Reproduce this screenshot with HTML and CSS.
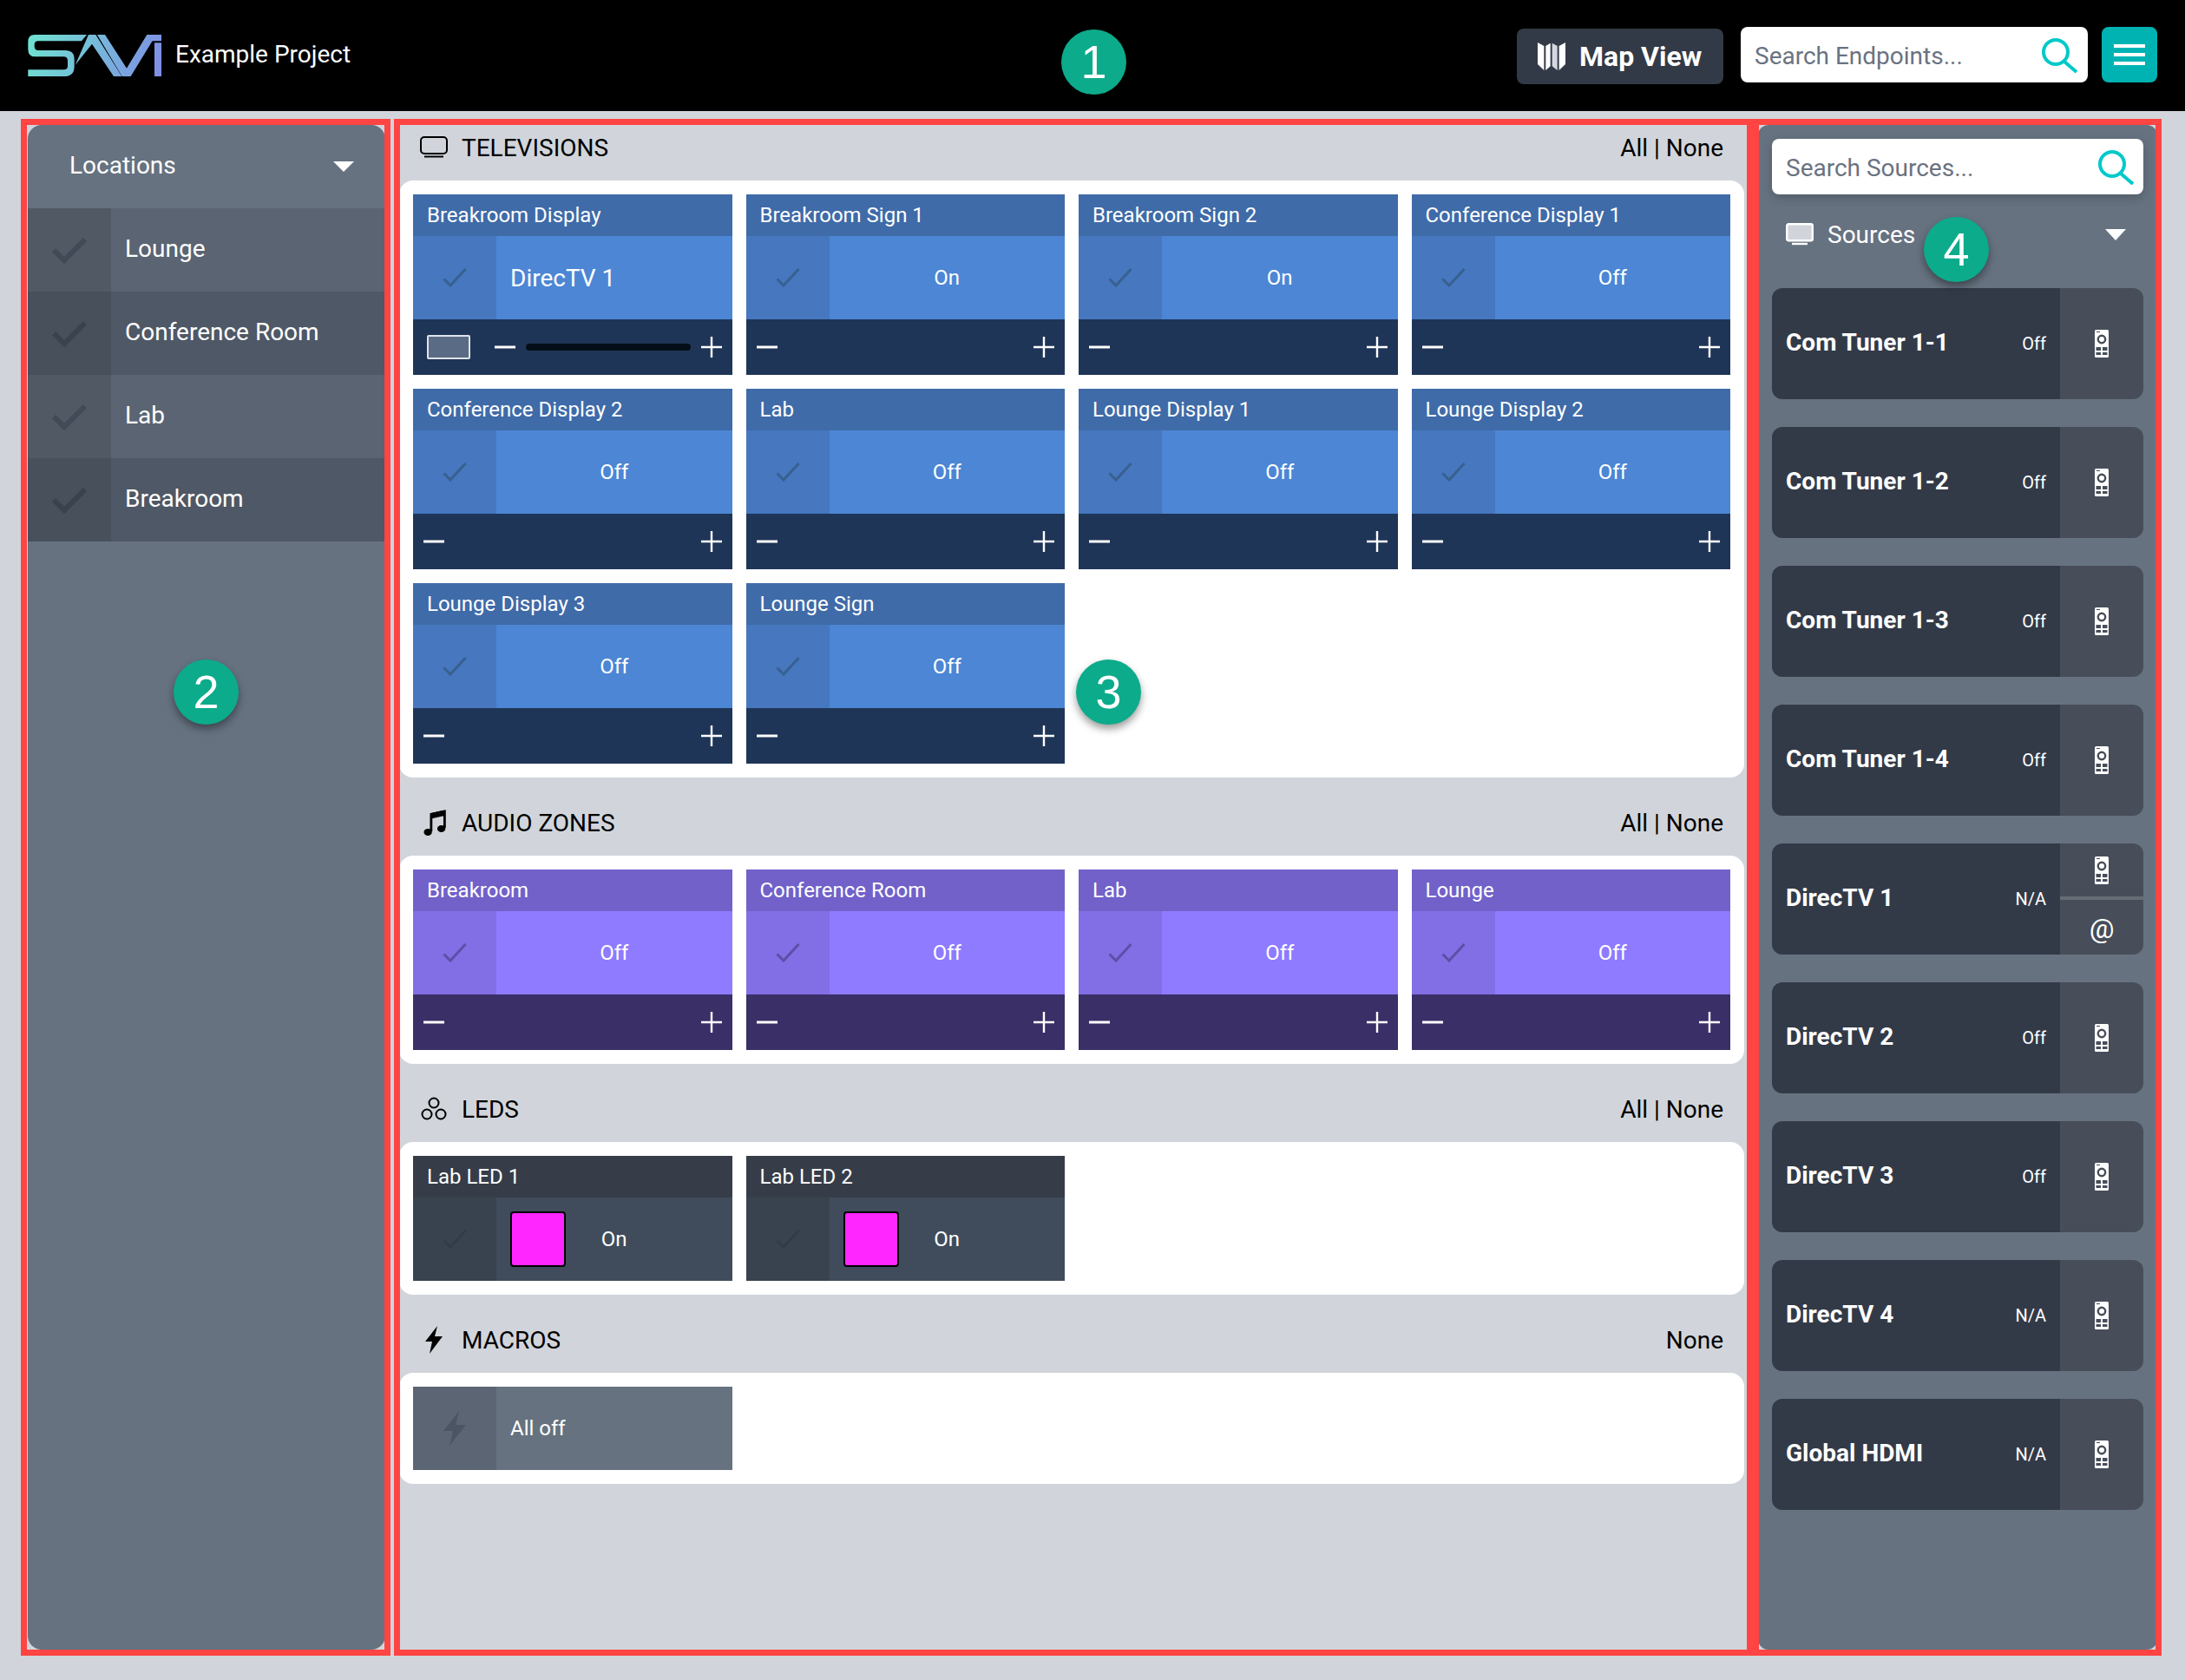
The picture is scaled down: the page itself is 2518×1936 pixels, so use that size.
FILE: index.html
```html
<!DOCTYPE html>
<html lang="en">
<head>
<meta charset="utf-8">
<title>SAVI - Example Project</title>
<link rel="stylesheet" href="styles.css">
</head>
<body>
<svg class="defs" width="0" height="0" aria-hidden="true">
  <defs>
    <linearGradient id="logo-grad" gradientUnits="userSpaceOnUse" x1="36" y1="60" x2="498" y2="204">
      <stop offset="0" stop-color="#6fe3cf"/>
      <stop offset="1" stop-color="#7f8de6"/>
    </linearGradient>
  </defs>
  <symbol id="i-check" viewBox="0 0 28 22"><path d="M1.5 12.5 L9 20 L26.5 1" fill="none" stroke="currentColor" stroke-width="3"/></symbol>
  <symbol id="i-check-bold" viewBox="0 0 40 31"><path d="M2 15 L14 27 L38 3" fill="none" stroke="currentColor" stroke-width="6"/></symbol>
  <symbol id="i-plus" viewBox="0 0 24 24"><path d="M12 0V24M0 12H24" stroke="currentColor" stroke-width="2.4"/></symbol>
  <symbol id="i-minus" viewBox="0 0 24 24"><path d="M0 12H24" stroke="currentColor" stroke-width="3"/></symbol>
  <symbol id="i-search" viewBox="0 0 42 40"><circle cx="16" cy="16" r="14" fill="none" stroke="currentColor" stroke-width="4"/><path d="M26 27 L40 39" stroke="currentColor" stroke-width="4"/></symbol>
  <symbol id="i-remote" viewBox="0 0 16 32">
    <rect width="16" height="32" rx="1.5" fill="#fff"/>
    <rect x="2" y="2" width="4" height="1" fill="#474d59"/>
    <circle cx="8" cy="11" r="4.2" fill="none" stroke="#474d59" stroke-width="2.4"/>
    <path d="M1.5 20H7V24H1.5ZM9 20H14.5V24H9ZM1.5 26H7V29H1.5ZM9 26H14.5V29H9Z" fill="#474d59"/>
  </symbol>
  <symbol id="i-bolt" viewBox="0 0 28 40"><path d="M19 0 L1 23 H12 L8 40 L27 16 H15 Z" fill="currentColor"/></symbol>
</svg>

<header class="topbar">
  <div class="brand">
    <svg class="logo" viewBox="36 60 462 144" aria-label="SAVI">
      <path fill="url(#logo-grad)" d="M60 60H240L222 82H72Q59 82 59 95V100Q59 114 72 114H165Q197 114 197 145V170Q197 204 160 204H37V181H160Q174 181 174 168V150Q174 136 160 136H62Q37 136 37 110V85Q37 60 60 60Z"/>
      <path fill="url(#logo-grad)" d="M200 165L246 60H271L361 204H333L258 92Z"/>
      <path fill="url(#logo-grad)" d="M276 60H303L378 176L448 60H480L392 204H362Z"/>
      <path fill="url(#logo-grad)" d="M474 88H498V204H474ZM468 60H498V82H456Z"/>
    </svg>
    <span class="project">Example Project</span>
  </div>
  <div class="topbar-actions">
    <button class="map-btn" type="button">
      <svg class="map-icon" viewBox="36 30 96 96">
        <path fill="#fff" d="M36 30L58 42V126L36 105Z"/>
        <path fill="#fff" d="M64 42L80 32V112L64 126Z"/>
        <path fill="#d5d8de" d="M86 32L104 42V126L86 112Z"/>
        <path fill="#fff" d="M110 42L132 30V105L110 126Z"/>
      </svg>
      Map View
    </button>
    <div class="search search-top">
      <span class="placeholder">Search Endpoints...</span>
      <svg class="search-icon"><use href="#i-search"/></svg>
    </div>
    <button class="menu-btn" type="button" aria-label="Menu"><span></span><span></span><span></span></button>
  </div>
</header>

<div class="content">
  <aside class="locations">
    <div class="panel-head">
      <span class="lift">Locations</span>
      <i class="caret"></i>
    </div>
    <div class="loc-row"><span class="loc-check"><svg><use href="#i-check-bold"/></svg></span><span class="lift">Lounge</span></div>
    <div class="loc-row alt"><span class="loc-check"><svg><use href="#i-check-bold"/></svg></span><span class="lift">Conference Room</span></div>
    <div class="loc-row"><span class="loc-check"><svg><use href="#i-check-bold"/></svg></span><span class="lift">Lab</span></div>
    <div class="loc-row alt"><span class="loc-check"><svg><use href="#i-check-bold"/></svg></span><span class="lift">Breakroom</span></div>
  </aside>

  <main class="endpoints">
    <section class="group">
      <div class="group-head">
        <svg class="g-icon" viewBox="0 0 32 26"><rect x="1" y="1" width="30" height="19" rx="4" fill="none" stroke="#000" stroke-width="2"/><path d="M5 23.5H27" stroke="#000" stroke-width="2"/></svg>
        <span class="group-title">TELEVISIONS</span>
        <span class="group-links">All | None</span>
      </div>
      <div class="tile-card">
        <article class="tile tv">
          <h3 class="tile-title">Breakroom Display</h3>
          <div class="tile-body"><span class="tile-check"><svg><use href="#i-check"/></svg></span><span class="tile-source">DirecTV 1</span></div>
          <div class="tile-ctrl"><span class="screen"></span><svg class="ctl minus-in"><use href="#i-minus"/></svg><span class="slider"></span><svg class="ctl"><use href="#i-plus"/></svg></div>
        </article>
        <article class="tile tv">
          <h3 class="tile-title">Breakroom Sign 1</h3>
          <div class="tile-body"><span class="tile-check"><svg><use href="#i-check"/></svg></span><span class="tile-state">On</span></div>
          <div class="tile-ctrl"><svg class="ctl"><use href="#i-minus"/></svg><svg class="ctl"><use href="#i-plus"/></svg></div>
        </article>
        <article class="tile tv">
          <h3 class="tile-title">Breakroom Sign 2</h3>
          <div class="tile-body"><span class="tile-check"><svg><use href="#i-check"/></svg></span><span class="tile-state">On</span></div>
          <div class="tile-ctrl"><svg class="ctl"><use href="#i-minus"/></svg><svg class="ctl"><use href="#i-plus"/></svg></div>
        </article>
        <article class="tile tv">
          <h3 class="tile-title">Conference Display 1</h3>
          <div class="tile-body"><span class="tile-check"><svg><use href="#i-check"/></svg></span><span class="tile-state">Off</span></div>
          <div class="tile-ctrl"><svg class="ctl"><use href="#i-minus"/></svg><svg class="ctl"><use href="#i-plus"/></svg></div>
        </article>
        <article class="tile tv">
          <h3 class="tile-title">Conference Display 2</h3>
          <div class="tile-body"><span class="tile-check"><svg><use href="#i-check"/></svg></span><span class="tile-state">Off</span></div>
          <div class="tile-ctrl"><svg class="ctl"><use href="#i-minus"/></svg><svg class="ctl"><use href="#i-plus"/></svg></div>
        </article>
        <article class="tile tv">
          <h3 class="tile-title">Lab</h3>
          <div class="tile-body"><span class="tile-check"><svg><use href="#i-check"/></svg></span><span class="tile-state">Off</span></div>
          <div class="tile-ctrl"><svg class="ctl"><use href="#i-minus"/></svg><svg class="ctl"><use href="#i-plus"/></svg></div>
        </article>
        <article class="tile tv">
          <h3 class="tile-title">Lounge Display 1</h3>
          <div class="tile-body"><span class="tile-check"><svg><use href="#i-check"/></svg></span><span class="tile-state">Off</span></div>
          <div class="tile-ctrl"><svg class="ctl"><use href="#i-minus"/></svg><svg class="ctl"><use href="#i-plus"/></svg></div>
        </article>
        <article class="tile tv">
          <h3 class="tile-title">Lounge Display 2</h3>
          <div class="tile-body"><span class="tile-check"><svg><use href="#i-check"/></svg></span><span class="tile-state">Off</span></div>
          <div class="tile-ctrl"><svg class="ctl"><use href="#i-minus"/></svg><svg class="ctl"><use href="#i-plus"/></svg></div>
        </article>
        <article class="tile tv">
          <h3 class="tile-title">Lounge Display 3</h3>
          <div class="tile-body"><span class="tile-check"><svg><use href="#i-check"/></svg></span><span class="tile-state">Off</span></div>
          <div class="tile-ctrl"><svg class="ctl"><use href="#i-minus"/></svg><svg class="ctl"><use href="#i-plus"/></svg></div>
        </article>
        <article class="tile tv">
          <h3 class="tile-title">Lounge Sign</h3>
          <div class="tile-body"><span class="tile-check"><svg><use href="#i-check"/></svg></span><span class="tile-state">Off</span></div>
          <div class="tile-ctrl"><svg class="ctl"><use href="#i-minus"/></svg><svg class="ctl"><use href="#i-plus"/></svg></div>
        </article>
      </div>
    </section>

    <section class="group">
      <div class="group-head">
        <svg class="g-icon" viewBox="0 0 32 32"><g transform="translate(3 0) scale(.94 1)"><path d="M10.5 26V6.5L27 3V22" fill="none" stroke="#000" stroke-width="3"/><path d="M10.5 5L27 1.500V8L10.5 11.500Z" fill="#000"/><ellipse cx="6.500" cy="27" rx="5" ry="4" fill="#000"/><ellipse cx="23" cy="23" rx="5" ry="4" fill="#000"/></g></svg>
        <span class="group-title">AUDIO ZONES</span>
        <span class="group-links">All | None</span>
      </div>
      <div class="tile-card">
        <article class="tile audio">
          <h3 class="tile-title">Breakroom</h3>
          <div class="tile-body"><span class="tile-check"><svg><use href="#i-check"/></svg></span><span class="tile-state">Off</span></div>
          <div class="tile-ctrl"><svg class="ctl"><use href="#i-minus"/></svg><svg class="ctl"><use href="#i-plus"/></svg></div>
        </article>
        <article class="tile audio">
          <h3 class="tile-title">Conference Room</h3>
          <div class="tile-body"><span class="tile-check"><svg><use href="#i-check"/></svg></span><span class="tile-state">Off</span></div>
          <div class="tile-ctrl"><svg class="ctl"><use href="#i-minus"/></svg><svg class="ctl"><use href="#i-plus"/></svg></div>
        </article>
        <article class="tile audio">
          <h3 class="tile-title">Lab</h3>
          <div class="tile-body"><span class="tile-check"><svg><use href="#i-check"/></svg></span><span class="tile-state">Off</span></div>
          <div class="tile-ctrl"><svg class="ctl"><use href="#i-minus"/></svg><svg class="ctl"><use href="#i-plus"/></svg></div>
        </article>
        <article class="tile audio">
          <h3 class="tile-title">Lounge</h3>
          <div class="tile-body"><span class="tile-check"><svg><use href="#i-check"/></svg></span><span class="tile-state">Off</span></div>
          <div class="tile-ctrl"><svg class="ctl"><use href="#i-minus"/></svg><svg class="ctl"><use href="#i-plus"/></svg></div>
        </article>
      </div>
    </section>

    <section class="group">
      <div class="group-head">
        <svg class="g-icon" viewBox="0 0 32 32"><g fill="none" stroke="#000" stroke-width="2"><circle cx="16" cy="9" r="5.500"/><circle cx="8" cy="22" r="5.500"/><circle cx="24" cy="22" r="5.500"/></g></svg>
        <span class="group-title">LEDS</span>
        <span class="group-links">All | None</span>
      </div>
      <div class="tile-card">
        <article class="tile led">
          <h3 class="tile-title">Lab LED 1</h3>
          <div class="tile-body"><span class="tile-check"><svg><use href="#i-check"/></svg></span><div class="led-main"><span class="swatch"></span><span class="tile-state">On</span></div></div>
        </article>
        <article class="tile led">
          <h3 class="tile-title">Lab LED 2</h3>
          <div class="tile-body"><span class="tile-check"><svg><use href="#i-check"/></svg></span><div class="led-main"><span class="swatch"></span><span class="tile-state">On</span></div></div>
        </article>
      </div>
    </section>

    <section class="group">
      <div class="group-head">
        <svg class="g-icon" viewBox="0 0 32 32"><path d="M20 0L6 18H14L11 32L26 12H17Z" fill="#000"/></svg>
        <span class="group-title">MACROS</span>
        <span class="group-links">None</span>
      </div>
      <div class="tile-card">
        <article class="tile macro">
          <div class="tile-body"><span class="tile-check"><svg class="bolt"><use href="#i-bolt"/></svg></span><span class="tile-source small">All off</span></div>
        </article>
      </div>
    </section>
  </main>

  <aside class="sources">
    <div class="search search-src">
      <span class="placeholder">Search Sources...</span>
      <svg class="search-icon"><use href="#i-search"/></svg>
    </div>
    <div class="sources-head">
      <svg class="src-icon" viewBox="0 0 32 26"><rect x="1.200" y="1.200" width="29.600" height="19" rx="2" fill="#d1d5db" stroke="#fff" stroke-width="2.400"/><path d="M7 24H25" stroke="#fff" stroke-width="2.400"/></svg>
      <span>Sources</span>
      <i class="caret"></i>
    </div>
    <div class="source"><div class="src-main"><strong>Com Tuner 1-1</strong><small>Off</small></div><div class="src-side"><span class="src-btn"><svg><use href="#i-remote"/></svg></span></div></div>
    <div class="source"><div class="src-main"><strong>Com Tuner 1-2</strong><small>Off</small></div><div class="src-side"><span class="src-btn"><svg><use href="#i-remote"/></svg></span></div></div>
    <div class="source"><div class="src-main"><strong>Com Tuner 1-3</strong><small>Off</small></div><div class="src-side"><span class="src-btn"><svg><use href="#i-remote"/></svg></span></div></div>
    <div class="source"><div class="src-main"><strong>Com Tuner 1-4</strong><small>Off</small></div><div class="src-side"><span class="src-btn"><svg><use href="#i-remote"/></svg></span></div></div>
    <div class="source"><div class="src-main"><strong>DirecTV 1</strong><small>N/A</small></div><div class="src-side split"><span class="src-btn"><svg><use href="#i-remote"/></svg></span><span class="src-btn at">@</span></div></div>
    <div class="source"><div class="src-main"><strong>DirecTV 2</strong><small>Off</small></div><div class="src-side"><span class="src-btn"><svg><use href="#i-remote"/></svg></span></div></div>
    <div class="source"><div class="src-main"><strong>DirecTV 3</strong><small>Off</small></div><div class="src-side"><span class="src-btn"><svg><use href="#i-remote"/></svg></span></div></div>
    <div class="source"><div class="src-main"><strong>DirecTV 4</strong><small>N/A</small></div><div class="src-side"><span class="src-btn"><svg><use href="#i-remote"/></svg></span></div></div>
    <div class="source"><div class="src-main"><strong>Global HDMI</strong><small>N/A</small></div><div class="src-side"><span class="src-btn"><svg><use href="#i-remote"/></svg></span></div></div>
  </aside>
</div>

<div class="callout-box box-locations"></div>
<div class="callout-box box-endpoints"></div>
<div class="callout-box box-sources"></div>
<span class="badge badge-1">1</span>
<span class="badge badge-2">2</span>
<span class="badge badge-3">3</span>
<span class="badge badge-4">4</span>
</body>
</html>
```

FILE: styles.css
```css
* { box-sizing: border-box; }

html, body { margin: 0; padding: 0; }

body {
  position: relative;
  width: 2518px;
  height: 1936px;
  overflow: hidden;
  background: #d1d5db;
  color: #000;
  font-family: Roboto, "Liberation Sans", sans-serif;
  font-size: 28px;
}

.defs { position: absolute; }

button { font-family: inherit; border: 0; cursor: pointer; }

/* Top bar */
.topbar {
  height: 128px;
  background: #000;
  display: flex;
  align-items: center;
  justify-content: space-between;
  padding: 0 32px;
}
.brand { display: flex; align-items: center; gap: 16px; }
.logo { width: 154px; height: 48px; display: block; }
.project { color: #fff; font-size: 28px; margin-top: -4px; }
.topbar-actions { display: flex; align-items: flex-start; }
.map-btn {
  width: 238px;
  height: 64px;
  margin-top: 2px;
  margin-right: 20px;
  padding: 0 0 0 24px;
  display: flex;
  align-items: center;
  gap: 16px;
  background: #333a47;
  color: #fff;
  border-radius: 8px;
  font-size: 32px;
  font-weight: 700;
}
.map-icon { width: 32px; height: 32px; }

.search {
  height: 64px;
  background: #fff;
  border-radius: 8px;
  display: flex;
  align-items: center;
  justify-content: space-between;
  padding: 0 11px 0 16px;
}
.placeholder { color: #6b7280; font-size: 28px; margin-top: 3px; }
.search-icon { width: 42px; height: 40px; color: #00c9c9; margin-top: 2px; }
.search-top { width: 400px; margin-right: 16px; }
.menu-btn {
  width: 64px;
  height: 64px;
  border-radius: 8px;
  background: #00b3b3;
  padding: 20px 14px;
  display: flex;
  flex-direction: column;
  justify-content: space-between;
}
.menu-btn span { display: block; height: 4px; background: #fff; }

/* Columns */
.content {
  display: grid;
  grid-template-columns: 412px 1550px 460px;
  column-gap: 16px;
  padding: 16px 32px 0;
  height: 1773px;
}

/* Locations */
.locations {
  background: #667280;
  border-radius: 16px;
  color: #fff;
  overflow: hidden;
}
.lift { margin-top: -3px; }
.panel-head {
  height: 96px;
  padding: 0 36px 0 48px;
  display: flex;
  align-items: center;
  justify-content: space-between;
}
.caret {
  width: 0;
  height: 0;
  border-left: 12px solid transparent;
  border-right: 12px solid transparent;
  border-top: 12px solid #fff;
}
.loc-row {
  height: 96px;
  display: grid;
  grid-template-columns: 96px 1fr;
  column-gap: 16px;
  align-items: center;
  background: #5b6472;
}
.loc-row.alt { background: #4f5866; }
.loc-check {
  height: 96px;
  margin-top: 0;
  background: #515965;
  color: #414a57;
  display: flex;
  align-items: center;
  justify-content: center;
}
.loc-row.alt .loc-check { background: #48505c; color: #3a424e; }
.loc-check svg { width: 40px; height: 31px; }

/* Endpoints */
.group + .group { margin-top: 26px; }
.group-head {
  height: 64px;
  padding: 0 24px 12px 24px;
  display: flex;
  align-items: center;
  font-size: 28px;
}
.g-icon { width: 32px; height: 32px; margin-right: 16px; flex: none; }
.group-title { flex: 1; }
.tile-card {
  background: #fff;
  border-radius: 16px;
  padding: 16px;
  display: grid;
  grid-template-columns: repeat(4, 1fr);
  gap: 16px;
}
.tile { color: #fff; }
.tile-title {
  margin: 0;
  height: 48px;
  padding: 0 16px;
  display: flex;
  align-items: center;
  font-size: 24px;
  font-weight: 400;
  background: var(--title);
}
.tile-body {
  height: 96px;
  display: grid;
  grid-template-columns: 96px 1fr;
  align-items: center;
  background: var(--main);
}
.tile-check {
  height: 96px;
  display: flex;
  align-items: center;
  justify-content: center;
  background: var(--check);
  color: var(--mark);
}
.tile-check svg { width: 28px; height: 22px; }
.tile-check svg.bolt { width: 28px; height: 40px; }
.tile-state { text-align: center; font-size: 24px; }
.tile-source { padding-left: 16px; font-size: 28px; }
.tile-source.small { font-size: 24px; }
.tile-ctrl {
  height: 64px;
  padding: 0 12px;
  display: flex;
  align-items: center;
  justify-content: space-between;
  background: var(--ctrl);
}
.ctl { width: 24px; height: 24px; flex: none; color: #fff; }
.minus-in { margin-left: 28px; }
.screen {
  width: 50px;
  height: 28px;
  margin-left: 4px;
  flex: none;
  background: #5a6b85;
  border: 2px solid #dfe4ea;
  border-radius: 2px;
}
.slider {
  flex: 1;
  height: 8px;
  margin: 0 12px;
  border-radius: 4px;
  background: #050e18;
}
.tv { --title: #3f6ba8; --main: #4c86d4; --check: #4677bf; --ctrl: #1f3557; --mark: #38608f; }
.audio { --title: #7161c9; --main: #8e7bff; --check: #826fe5; --ctrl: #3a2f67; --mark: #5f4ea6; }
.led { --title: #363d49; --main: #404c5b; --check: #39434f; --ctrl: #363d49; --mark: #323b47; }
.macro { --title: #667280; --main: #667280; --check: #5c6573; --ctrl: #667280; --mark: #4b5563; }
.led-main {
  display: grid;
  grid-template-columns: 1fr auto 1fr;
  align-items: center;
}
.swatch {
  width: 64px;
  height: 64px;
  margin-left: 16px;
  background: #ff26ff;
  border: 2px solid #000;
  border-radius: 4px;
}

/* Sources */
.sources {
  background: #667280;
  border-radius: 12px;
  padding: 16px;
  color: #fff;
}
.search-src { box-shadow: 0 4px 12px rgba(0, 0, 0, .2); padding-right: 10px; }
.sources-head {
  height: 92px;
  margin-bottom: 16px;
  padding: 0 20px 0 16px;
  display: flex;
  align-items: center;
}
.src-icon { width: 32px; height: 26px; margin-right: 16px; }
.sources-head span { flex: 1; }
.sources-head .caret { border-top-width: 13px; }
.source {
  height: 128px;
  margin-bottom: 32px;
  display: grid;
  grid-template-columns: 1fr 96px;
  border-radius: 12px;
  overflow: hidden;
}
.src-main {
  background: #333a47;
  padding: 0 16px;
  display: flex;
  align-items: center;
  justify-content: space-between;
}
.src-main strong { font-size: 28px; font-weight: 700; margin-top: -3px; }
.src-main small { font-size: 20px; margin-top: 0; }
.src-side {
  background: #474d59;
  display: flex;
  flex-direction: column;
}
.src-side.split { row-gap: 4px; background: #666c74; }
.src-btn {
  flex: 1;
  display: flex;
  align-items: center;
  justify-content: center;
  background: #474d59;
}
.src-btn svg { width: 16px; height: 32px; }
.src-btn.at { font-size: 32px; padding-top: 2px; }

/* Annotation overlays */
.callout-box {
  position: absolute;
  top: 137px;
  height: 1771px;
  border: 7px solid #ff4444;
}
.box-locations { left: 24px; width: 426px; }
.box-endpoints { left: 454px; width: 1566px; }
.box-sources { left: 2020px; width: 471px; }

.badge {
  position: absolute;
  width: 75px;
  height: 75px;
  border-radius: 50%;
  background: #0cab8b;
  color: #fff;
  font-family: "Liberation Sans", Arial, sans-serif;
  font-size: 54px;
  line-height: 75px;
  text-align: center;
  box-shadow: 0 5px 10px rgba(0, 0, 0, .4);
}
.badge-1 { left: 1223px; top: 34px; }
.badge-2 { left: 200px; top: 760px; }
.badge-3 { left: 1240px; top: 760px; }
.badge-4 { left: 2217px; top: 250px; }
```
